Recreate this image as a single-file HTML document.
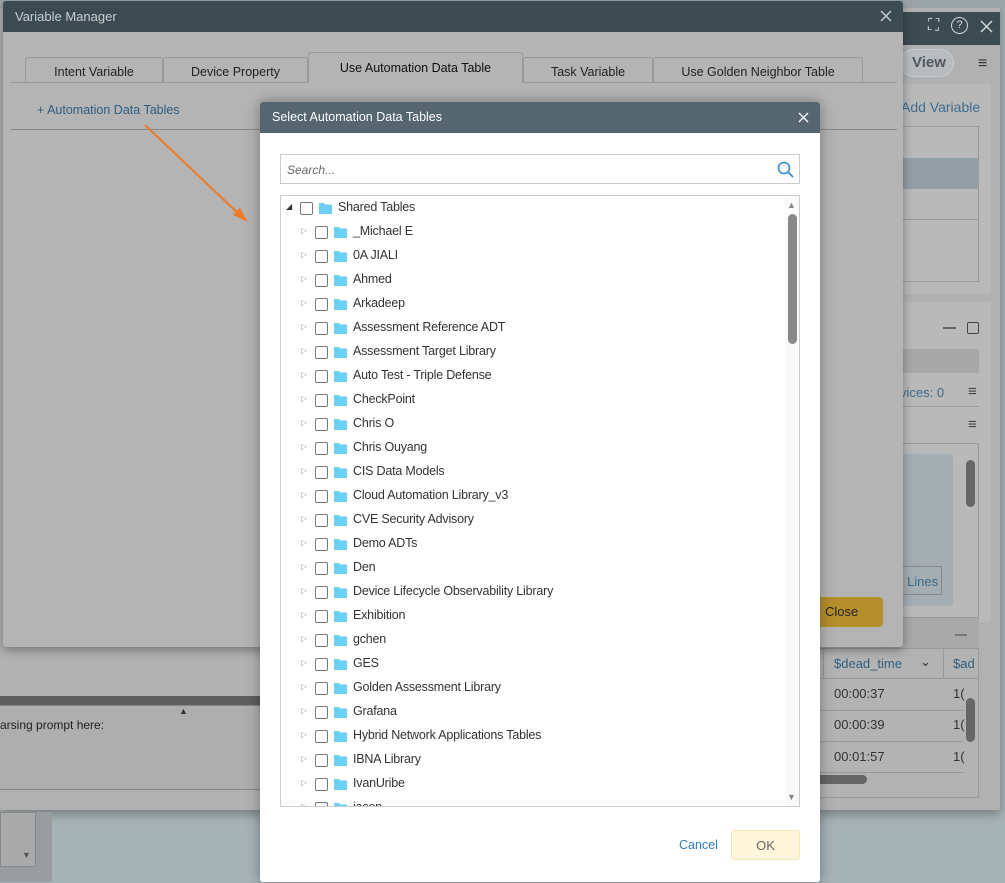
<!DOCTYPE html>
<html><head><meta charset="utf-8">
<style>
*{box-sizing:border-box;margin:0;padding:0}
body{width:1005px;height:883px;overflow:hidden;background:#a6b3b6;font-family:"Liberation Sans",sans-serif;font-size:12px;position:relative;color:#333}
.abs{position:absolute}
</style></head><body>
<div class="abs" style="left:0;top:0;width:1000px;height:810px;background:#b1b1b1;box-shadow:0 4px 10px rgba(0,0,0,.3)"></div>
<div class="abs" style="left:0;top:0;width:1005px;height:8px;background:#9aa3a6"></div>
<div class="abs" style="left:900px;top:12px;width:100px;height:33px;background:#3c4a52"></div>
<div class="abs" style="left:928px;top:17px;color:#d0d5d8;font-size:16px">⛶</div>
<div class="abs" style="left:951px;top:17px;width:17px;height:17px;border:1.5px solid #d0d5d8;border-radius:50%;color:#d0d5d8;font-size:11px;text-align:center;line-height:14px">?</div>
<svg class="abs" style="left:980px;top:20px" width="13" height="13"><path d="M1 1L12 12M12 1L1 12" stroke="#d0d5d8" stroke-width="1.5"/></svg>
<div class="abs" style="left:900px;top:49px;width:54px;height:28px;border:1px solid #c5cdd4;border-radius:14px;background:#b8bcbf"></div>
<div class="abs" style="left:912px;top:54px;color:#505860;font-size:15px;font-weight:bold">View</div>
<div class="abs" style="left:978px;top:55px;color:#333;font-size:16px">≡</div>
<div class="abs" style="left:900px;top:84px;width:91px;height:210px;background:#b9b9b9"></div>
<div class="abs" style="left:901px;top:99px;color:#3f6c8e;font-size:14px">Add Variable</div>
<div class="abs" style="left:900px;top:126px;width:79px;height:156px;border:1px solid #999"></div>
<div class="abs" style="left:900px;top:158px;width:78px;height:31px;background:#959fa6"></div>
<div class="abs" style="left:900px;top:219px;width:78px;height:1px;background:#999"></div>
<div class="abs" style="left:900px;top:302px;width:91px;height:320px;background:#b9b9b9"></div>
<div class="abs" style="left:943px;top:327px;width:13px;height:2px;background:#666"></div>
<div class="abs" style="left:967px;top:322px;width:12px;height:12px;border:1.5px solid #444;border-radius:2px"></div>
<div class="abs" style="left:900px;top:349px;width:79px;height:24px;background:#a8a8a8"></div>
<div class="abs" style="left:900px;top:385px;color:#3f6c8e;font-size:13px">vices: 0</div>
<div class="abs" style="left:968px;top:383px;color:#444;font-size:15px">≡</div>
<div class="abs" style="left:900px;top:406px;width:79px;height:1px;background:#999"></div>
<div class="abs" style="left:968px;top:416px;color:#444;font-size:15px">≡</div>
<div class="abs" style="left:880px;top:443px;width:99px;height:175px;border:1px solid #999"></div>
<div class="abs" style="left:880px;top:454px;width:73px;height:152px;background:#a3adb2;border-radius:4px"></div>
<div class="abs" style="left:902px;top:566px;width:40px;height:29px;border:1px solid #888;color:#3f6c8e;font-size:13px;padding:7px 0 0 4px">Lines</div>
<div class="abs" style="left:966px;top:460px;width:9px;height:47px;background:#666;border-radius:5px"></div>
<div class="abs" style="left:880px;top:618px;width:99px;height:30px;background:#a9a9a9"></div>
<div class="abs" style="left:955px;top:634px;width:12px;height:2px;background:#777"></div>
<div class="abs" style="left:780px;top:648px;width:199px;height:150px;border:1px solid #999;background:#b3b3b3"></div>
<div class="abs" style="left:823px;top:648px;width:1px;height:30px;background:#999"></div>
<div class="abs" style="left:943px;top:648px;width:1px;height:30px;background:#999"></div>
<div class="abs" style="left:780px;top:678px;width:199px;height:1px;background:#999"></div>
<div class="abs" style="left:834px;top:656px;color:#2e5f82;font-size:13px">$dead_time</div>
<div class="abs" style="left:920px;top:654px;color:#333;font-size:13px">⌄</div>
<div class="abs" style="left:953px;top:656px;color:#2e5f82;font-size:13px">$ad</div>
<div class="abs" style="left:834px;top:686px;font-size:13px">00:00:37</div>
<div class="abs" style="left:834px;top:717px;font-size:13px">00:00:39</div>
<div class="abs" style="left:834px;top:749px;font-size:13px">00:01:57</div>
<div class="abs" style="left:953px;top:686px;font-size:13px">1(</div>
<div class="abs" style="left:953px;top:717px;font-size:13px">1(</div>
<div class="abs" style="left:953px;top:749px;font-size:13px">1(</div>
<div class="abs" style="left:780px;top:710px;width:183px;height:1px;background:#999"></div>
<div class="abs" style="left:780px;top:741px;width:183px;height:1px;background:#999"></div>
<div class="abs" style="left:780px;top:772px;width:183px;height:1px;background:#999"></div>
<div class="abs" style="left:966px;top:698px;width:9px;height:44px;background:#666;border-radius:5px"></div>
<div class="abs" style="left:800px;top:775px;width:67px;height:9px;background:#666;border-radius:5px"></div>
<div class="abs" style="left:0;top:696px;width:260px;height:9px;background:#5f5f5f"></div>
<div class="abs" style="left:0;top:705px;width:260px;height:85px;background:#aeaeae;border-top:1px solid #888;border-bottom:1px solid #888"></div>
<div class="abs" style="left:0;top:718px;font-size:12px;color:#222">arsing prompt here:</div>
<div class="abs" style="left:179px;top:706px;font-size:9px;color:#333">▲</div>
<div class="abs" style="left:0;top:812px;width:52px;height:70px;background:#9a9d9f"></div>
<div class="abs" style="left:0;top:812px;width:36px;height:55px;background:#aaa;border:1px solid #888"></div>
<div class="abs" style="left:22px;top:850px;font-size:9px;color:#555">▼</div>
<div class="abs" style="left:3px;top:1px;width:900px;height:646px;background:#b4b4b4;box-shadow:0 3px 10px rgba(0,0,0,.35);border-radius:3px"></div>
<div class="abs" style="left:3px;top:1px;width:900px;height:31px;background:#3c4a52;border-radius:3px 3px 0 0"></div>
<div class="abs" style="left:15px;top:9px;color:#c8ced2;font-size:13px">Variable Manager</div>
<svg class="abs" style="left:880px;top:10px" width="12" height="12"><path d="M1 1L11 11M11 1L1 11" stroke="#c8ced2" stroke-width="1.4"/></svg>
<div class="abs" style="left:10px;top:82px;width:887px;height:1px;background:#999"></div>
<div class="abs" style="left:25px;top:57px;width:138px;height:26px;border:1px solid #999;border-bottom:none;border-radius:3px 3px 0 0;text-align:center;padding-top:7px;font-size:12.5px;color:#222">Intent Variable</div>
<div class="abs" style="left:163px;top:57px;width:145px;height:26px;border:1px solid #999;border-bottom:none;border-radius:3px 3px 0 0;text-align:center;padding-top:7px;font-size:12.5px;color:#222">Device Property</div>
<div class="abs" style="left:308px;top:52px;width:215px;height:31px;border:1px solid #999;border-bottom:none;background:#b4b4b4;border-radius:3px 3px 0 0;text-align:center;padding-top:8px;font-size:12.5px;color:#111">Use Automation Data Table</div>
<div class="abs" style="left:523px;top:57px;width:130px;height:26px;border:1px solid #999;border-bottom:none;border-radius:3px 3px 0 0;text-align:center;padding-top:7px;font-size:12.5px;color:#222">Task Variable</div>
<div class="abs" style="left:653px;top:57px;width:210px;height:26px;border:1px solid #999;border-bottom:none;border-radius:3px 3px 0 0;text-align:center;padding-top:7px;font-size:12.5px;color:#222">Use Golden Neighbor Table</div>
<div class="abs" style="left:37px;top:103px;color:#2e5f82;font-size:12.5px">+ Automation Data Tables</div>
<div class="abs" style="left:10px;top:129px;width:887px;height:1px;background:#888"></div>
<div class="abs" style="left:814px;top:597px;width:69px;height:30px;background:#b48f2c;border-radius:4px;color:#222;font-size:13px;padding:7px 0 0 11px">Close</div>
<svg class="abs" style="left:0;top:0" width="300" height="240"><line x1="145" y1="125" x2="243" y2="218" stroke="#ee7b22" stroke-width="2"/><polygon points="248,222 233,215 240,208" fill="#ee7b22"/></svg>
<div class="abs" style="left:260px;top:102px;width:560px;height:780px;background:#fff;border-radius:3px;box-shadow:0 0 14px rgba(0,0,0,.35)"></div>
<div class="abs" style="left:260px;top:102px;width:560px;height:31px;background:#566670;border-radius:3px 3px 0 0"></div>
<div class="abs" style="left:272px;top:110px;color:#fff;font-size:12.5px">Select Automation Data Tables</div>
<svg class="abs" style="left:798px;top:112px" width="11" height="11"><path d="M1 1L10 10M10 1L1 10" stroke="#fff" stroke-width="1.4"/></svg>
<div class="abs" style="left:280px;top:154px;width:520px;height:30px;border:1px solid #ccc"></div>
<div class="abs" style="left:287px;top:163px;color:#666;font-style:italic;font-size:12px">Search...</div>
<svg class="abs" style="left:777px;top:161px" width="18" height="18"><circle cx="7" cy="7" r="5.5" fill="none" stroke="#3a8cc8" stroke-width="1.6"/><line x1="11" y1="11" x2="16" y2="16" stroke="#3a8cc8" stroke-width="1.8"/></svg>
<div class="abs" style="left:280px;top:195px;width:520px;height:612px;border:1px solid #ccc;overflow:hidden" id="tree">
<div class="abs" style="left:504px;top:0;width:14px;height:611px;background:#fafafa"></div>
<div class="abs" style="left:507px;top:18px;width:9px;height:130px;background:#888;border-radius:5px"></div>
<div class="abs" style="left:506px;top:4px;font-size:9px;color:#888">▲</div>
<div class="abs" style="left:506px;top:596px;font-size:9px;color:#888">▼</div>
</div>
<div class="abs" style="left:679px;top:838px;color:#2f7ab8;font-size:12.5px">Cancel</div>
<div class="abs" style="left:731px;top:830px;width:69px;height:30px;background:#fff6dc;border:1px solid #f5e6b8;border-radius:3px;text-align:center;padding-top:7px;color:#666;font-size:13px">OK</div>
<script>
var items=["_Michael E","0A JIALI","Ahmed","Arkadeep","Assessment Reference ADT","Assessment Target Library","Auto Test - Triple Defense","CheckPoint","Chris O","Chris Ouyang","CIS Data Models","Cloud Automation Library_v3","CVE Security Advisory","Demo ADTs","Den","Device Lifecycle Observability Library","Exhibition","gchen","GES","Golden Assessment Library","Grafana","Hybrid Network Applications Tables","IBNA Library","IvanUribe","jason"];
var t=document.getElementById('tree'),h='';
function row(y,x,txt,root){
 h+='<div class="abs" style="left:'+(x+5)+'px;top:'+(y-6)+'px;font-size:8px;color:'+(root?'#333':'#999')+'">'+(root?'◢':'▷')+'</div>';
 h+='<div class="abs" style="left:'+(x+19)+'px;top:'+(y-6)+'px;width:13px;height:13px;border:1px solid #777;border-radius:2px"></div>';
 h+='<svg class="abs" style="left:'+(x+38)+'px;top:'+(y-6)+'px" width="13" height="12"><path d="M0 1h5l1.5 1.5H13V12H0z" fill="#6ecff6"/></svg>';
 h+='<div class="abs" style="left:'+(x+57)+'px;top:'+(y-8)+'px;font-size:12.5px;letter-spacing:-0.2px;color:#333;white-space:nowrap">'+txt+'</div>';
}
row(12,0,"Shared Tables",true);
for(var i=0;i<items.length;i++)row(36+24*i,15,items[i],false);
t.insertAdjacentHTML('afterbegin',h);
</script>
</body></html>
